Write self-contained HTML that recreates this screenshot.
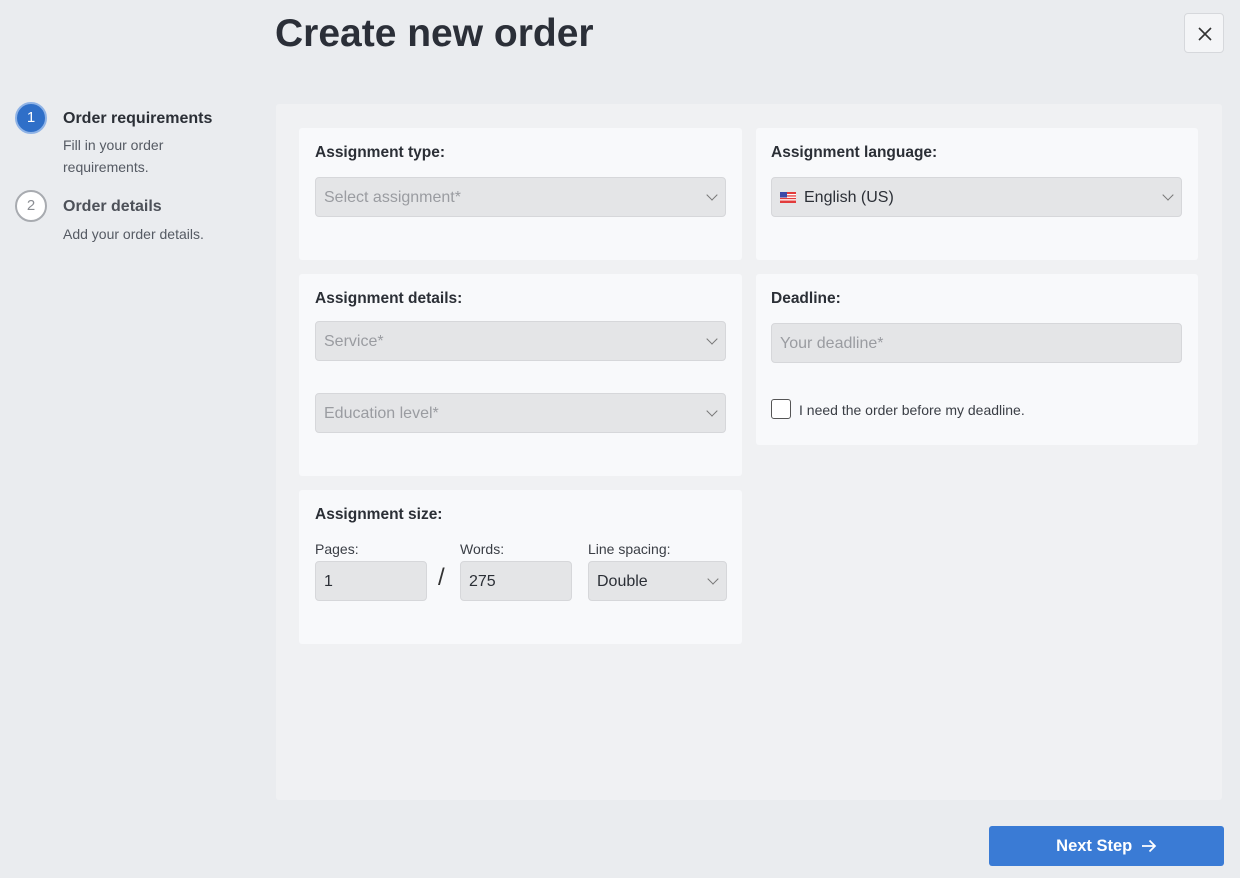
<!DOCTYPE html>
<html><head><style>
*{box-sizing:border-box;margin:0;padding:0}
body{width:1240px;height:878px;background:#eaecef;font-family:"Liberation Sans",sans-serif;color:#2b2f36;position:relative;overflow:hidden}
.abs{position:absolute}
h1{position:absolute;left:275px;top:12px;font-size:39px;font-weight:bold;color:#2b2f38;letter-spacing:0}
.close{left:1184px;top:13px;width:40px;height:40px;border:1px solid #d6d8dc;border-radius:4px;background:#f4f5f7}
.step{left:15px;width:32px;height:32px;border-radius:50%;font-size:15px;text-align:center;line-height:28px}
.st{left:63px;font-size:16px;font-weight:bold}
.sd{left:63px;font-size:14px;color:#555a63;line-height:22px}
.panel{left:276px;top:104px;width:946px;height:696px;background:#f0f1f3;border-radius:3px}
.card{background:#f8f9fb;border-radius:3px}
.lbl{font-size:15.5px;font-weight:bold;color:#2b2f36}
.inp{height:40px;background:#e4e5e7;border:1px solid #d6d7da;border-radius:4px;font-size:16px;color:#9a9ca1;padding-left:8px;line-height:39px}
.chev{position:absolute;right:9px;top:13px;width:8px;height:8px;border-right:1.3px solid #777;border-bottom:1.3px solid #777;transform:rotate(45deg)}
.sm{font-size:14px;color:#3a3e45}
.btn{left:989px;top:826px;width:235px;height:40px;background:#3a7bd5;border-radius:3px;color:#fff;font-size:16.5px;font-weight:bold;text-align:center;line-height:40px}
</style></head><body>
<h1>Create new order</h1>
<div class="abs close"><svg width="40" height="40" viewBox="0 0 40 40"><path d="M14 14L26 26M26 14L14 26" stroke="#333" stroke-width="1.6"/></svg></div>

<div class="abs step" style="top:102px;background:#2f6fc8;border:2px solid #8fb3e6;color:#fff">1</div>
<div class="abs st" style="top:110px">Order requirements</div>
<div class="abs sd" style="top:134px">Fill in your order<br>requirements.</div>
<div class="abs step" style="top:190px;border:2px solid #a8abb0;color:#8a8d92;background:#fff">2</div>
<div class="abs st" style="top:198px;color:#4d5159">Order details</div>
<div class="abs sd" style="top:223px">Add your order details.</div>

<div class="abs panel"></div>

<div class="abs card" style="left:299px;top:128px;width:443px;height:132px"></div>
<div class="abs lbl" style="left:315px;top:144px">Assignment type:</div>
<div class="abs inp" style="left:315px;top:177px;width:411px">Select assignment*<span class="chev"></span></div>

<div class="abs card" style="left:756px;top:128px;width:442px;height:132px"></div>
<div class="abs lbl" style="left:771px;top:144px">Assignment language:</div>
<div class="abs inp" style="left:771px;top:177px;width:411px;color:#2b2f36;padding-left:32px">English (US)<span class="chev"></span>
<svg class="abs" style="left:8px;top:14px" width="16" height="11" viewBox="0 0 16 11"><rect width="16" height="11" fill="#e23c3c"/><rect y="2" width="16" height="1.3" fill="#fff"/><rect y="4.6" width="16" height="1.3" fill="#fff"/><rect y="7.2" width="16" height="1.3" fill="#fff"/><rect width="7" height="5.5" fill="#3c4aa8"/></svg></div>

<div class="abs card" style="left:299px;top:274px;width:443px;height:202px"></div>
<div class="abs lbl" style="left:315px;top:290px">Assignment details:</div>
<div class="abs inp" style="left:315px;top:321px;width:411px">Service*<span class="chev"></span></div>
<div class="abs inp" style="left:315px;top:393px;width:411px">Education level*<span class="chev"></span></div>

<div class="abs card" style="left:756px;top:274px;width:442px;height:171px"></div>
<div class="abs lbl" style="left:771px;top:290px">Deadline:</div>
<div class="abs inp" style="left:771px;top:323px;width:411px">Your deadline*</div>
<div class="abs" style="left:771px;top:399px;width:20px;height:20px;border:1.5px solid #555;border-radius:3px;background:#fff"></div>
<div class="abs sm" style="left:799px;top:402px">I need the order before my deadline.</div>

<div class="abs card" style="left:299px;top:490px;width:443px;height:154px"></div>
<div class="abs lbl" style="left:315px;top:506px">Assignment size:</div>
<div class="abs sm" style="left:315px;top:541px">Pages:</div>
<div class="abs sm" style="left:460px;top:541px">Words:</div>
<div class="abs sm" style="left:588px;top:541px">Line spacing:</div>
<div class="abs inp" style="left:315px;top:561px;width:112px;color:#2b2f36">1</div>
<div class="abs" style="left:438px;top:564px;font-size:24px;color:#333">/</div>
<div class="abs inp" style="left:460px;top:561px;width:112px;color:#2b2f36">275</div>
<div class="abs inp" style="left:588px;top:561px;width:139px;color:#2b2f36">Double<span class="chev"></span></div>

<div class="abs btn">Next Step <svg style="vertical-align:-2px;margin-left:4px" width="16" height="14" viewBox="0 0 16 14"><path d="M1 7H14M8.5 1.5L14 7L8.5 12.5" stroke="#fff" stroke-width="1.7" fill="none"/></svg></div>
</body></html>
